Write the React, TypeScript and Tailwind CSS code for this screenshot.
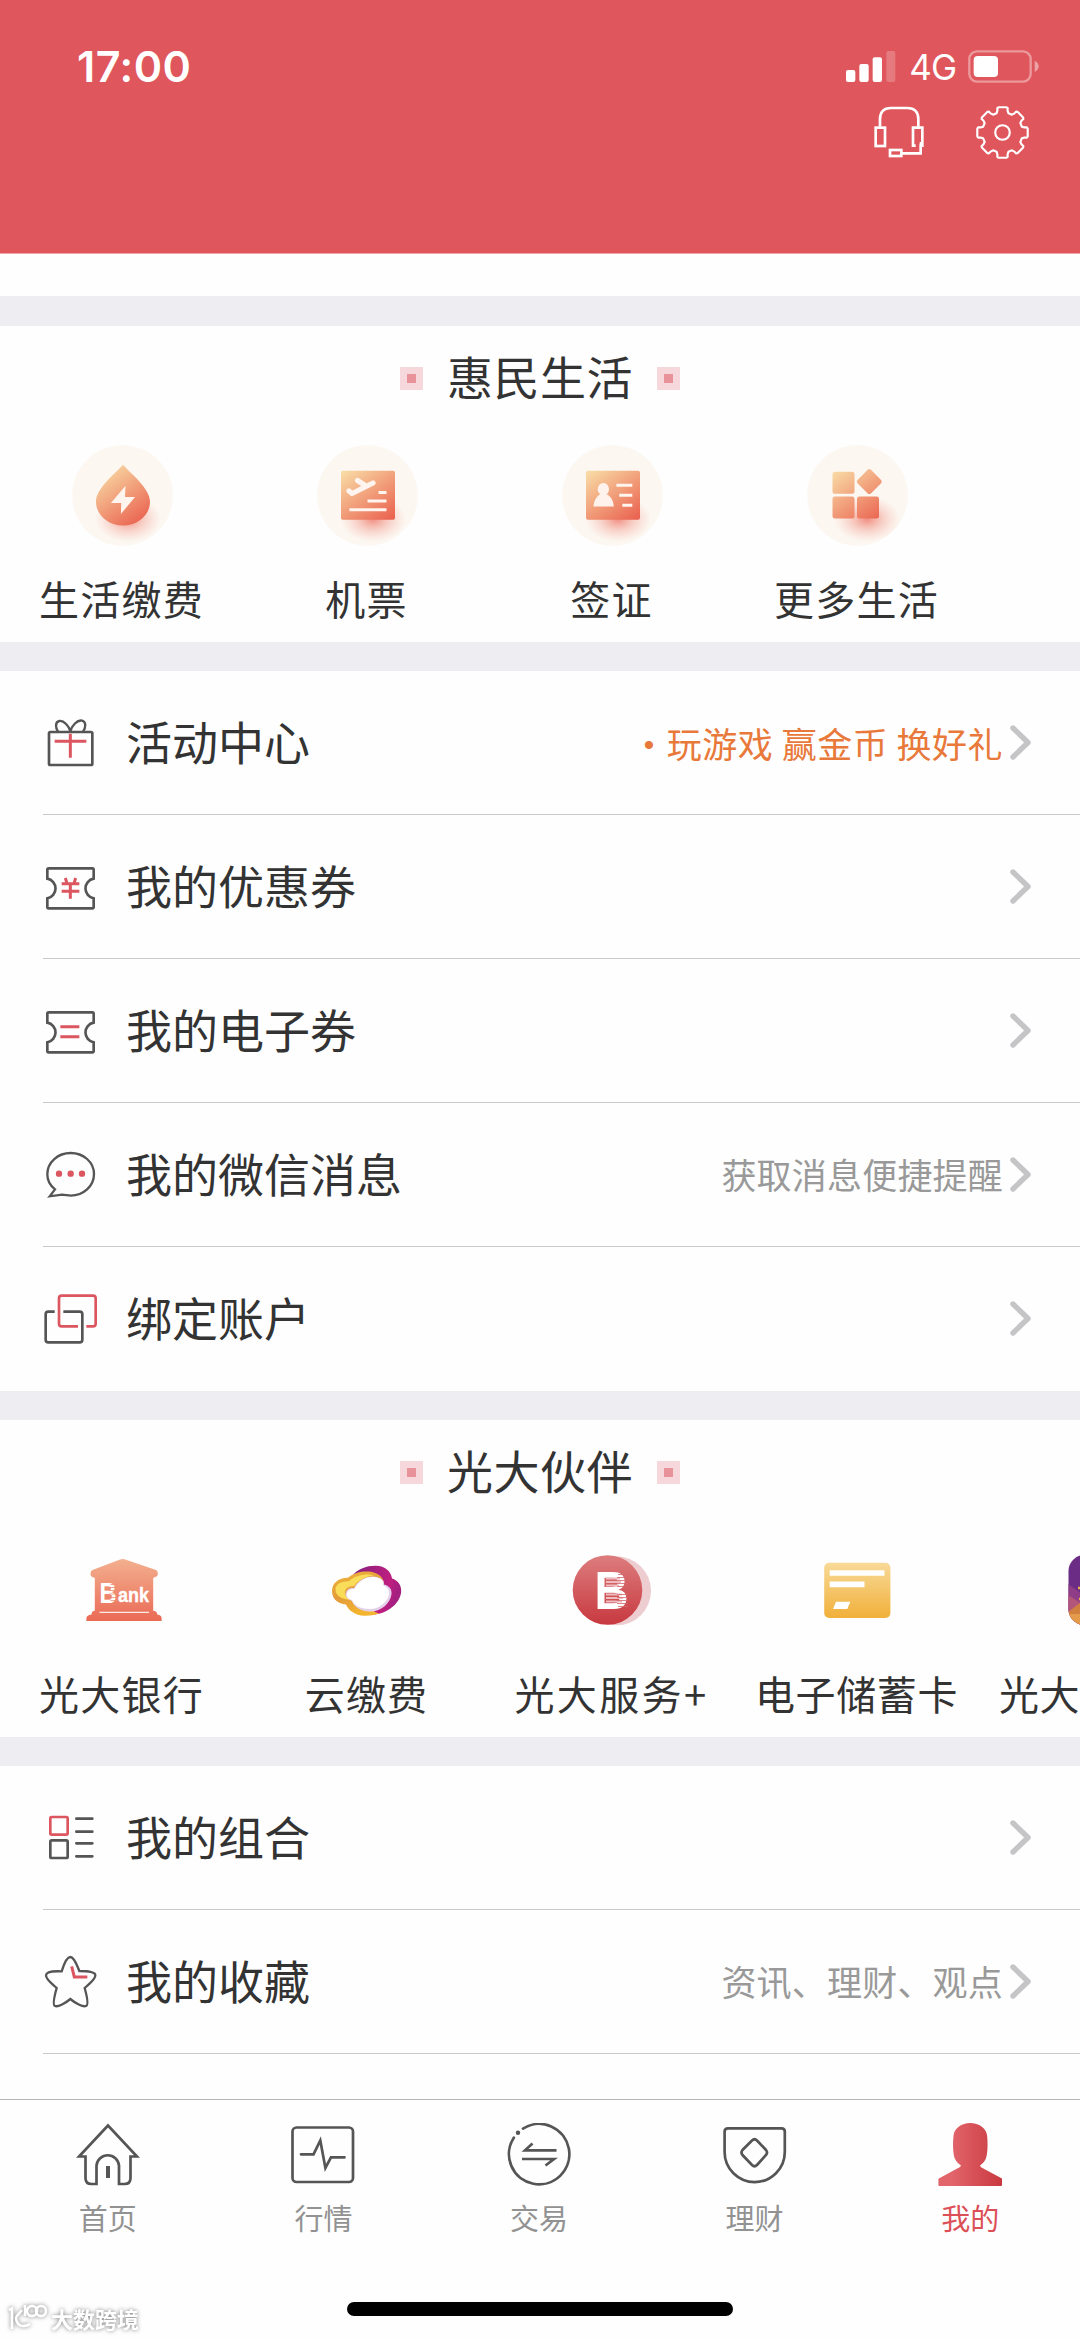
import type { ReactNode } from 'react'

const RED = '#dc5660'
const DARK = '#555555'

function gearPath() {
  const pts: string[] = []
  for (let i = 0; i < 8; i++) {
    const corners = [[61, -17], [68, -13], [75, -12], [77, -9], [77, 9], [75, 12], [68, 13], [61, 17]]
    corners.forEach(([r, deg]) => {
      const a = ((i * 45 + deg - 90) * Math.PI) / 180
      pts.push(`${(80 + r * Math.cos(a)).toFixed(1)} ${(80 + r * Math.sin(a)).toFixed(1)}`)
    })
  }
  return `M${pts.join('L')}Z`
}

function Header() {
  return (
    <header className="h-[254px] shrink-0 border-b border-[#f0a6a9] bg-[#df565c] text-white">
      <div className="flex h-[104px] items-center justify-between pl-[77px] pr-[41px] pt-[28px]">
        <span className="font-['Inter'] text-[43px] font-semibold leading-none tracking-[0.5px]">17:00</span>
        <div className="flex items-center">
          <svg className="h-[31px] w-[50px]" viewBox="0 0 150 93" fill="#fff">
            <rect x="0" y="57" width="28" height="36" rx="6" />
            <rect x="40" y="39" width="28" height="54" rx="6" />
            <rect x="80" y="19" width="28" height="74" rx="6" />
            <rect x="121" y="0" width="27" height="93" rx="6" opacity="0.22" />
          </svg>
          <span className="ml-[13px] translate-y-[1px] font-['Inter'] text-[35px] leading-none tracking-[-1px]">4G</span>
          <svg className="ml-[12px] h-[33px] w-[71px]" viewBox="0 0 213 99">
            <rect x="4" y="4" width="184" height="91" rx="23" fill="none" stroke="#fff" strokeWidth="7" opacity="0.4" />
            <rect x="17" y="18" width="73" height="63" rx="12" fill="#fff" />
            <path d="M200 32C209 36 212 43 212 49C212 55 209 62 200 66Z" fill="#fff" opacity="0.45" />
          </svg>
        </div>
      </div>
      <div className="flex h-[56px] items-center justify-end gap-[52px] pr-[51px]">
        <svg className="h-[52px] w-[50px]" viewBox="0 0 150 156" fill="none" stroke="#fff" strokeWidth="8">
          <path d="M18 62V40C18 18 30 6 50 6H101C121 6 133 18 133 40V62" />
          <rect x="5" y="65" width="28" height="55" />
          <path d="M125 119H117V65H145V119H140V142H84M141 108V122" />
          <rect x="48" y="132" width="34" height="18" />
        </svg>
        <svg className="h-[53px] w-[53px]" viewBox="0 0 160 160" fill="none" stroke="#fff" strokeWidth="6.5" strokeLinejoin="round">
          <path d={gearPath()} />
          <circle cx="80" cy="80" r="22" />
        </svg>
      </div>
    </header>
  )
}

function Mark() {
  return (
    <span className="flex h-[23px] w-[23px] items-center justify-center bg-[#f6d7dc]">
      <span className="h-[9px] w-[9px] bg-[#e8929a]" />
    </span>
  )
}

function SectionTitle({ children }: { children: ReactNode }) {
  return (
    <div className="flex h-[104px] items-center justify-center gap-[24px]">
      <Mark />
      <h2 className="-mt-[6px] text-[46px] leading-none tracking-[0.5px]">{children}</h2>
      <Mark />
    </div>
  )
}

function IconItem({ label, icon, labelClass = 'text-center tracking-[1.2px]' }: { label: string; icon: ReactNode; labelClass?: string }) {
  return (
    <div className="flex w-[245px] shrink-0 flex-col items-center">
      {icon}
      <span className={`mr-[2px] mt-[32px] whitespace-nowrap text-[40px] leading-[40px] ${labelClass}`}>{label}</span>
    </div>
  )
}

function LifeIcon({ id, glowX = 56, children }: { id: string; glowX?: number; children: ReactNode }) {
  return (
    <svg className="h-[101px] w-[101px]" viewBox="0 0 101 101">
      <defs>
        <linearGradient id={`${id}-fill`} gradientUnits="userSpaceOnUse" x1="32" y1="24" x2="72" y2="78">
          <stop offset="0" stopColor="#f8d9a3" />
          <stop offset="1" stopColor="#ea604e" />
        </linearGradient>
        <radialGradient id={`${id}-glow`}>
          <stop offset="0" stopColor="#ee6a5c" stopOpacity="0.75" />
          <stop offset="0.5" stopColor="#f08a7c" stopOpacity="0.35" />
          <stop offset="1" stopColor="#f5a59a" stopOpacity="0" />
        </radialGradient>
        <clipPath id={`${id}-clip`}>
          <circle cx="50.5" cy="50.5" r="50.3" />
        </clipPath>
      </defs>
      <circle cx="50.5" cy="50.5" r="50.3" fill="#fcf7f1" />
      <ellipse cx={glowX} cy="74" rx="33" ry="23" fill={`url(#${id}-glow)`} clipPath={`url(#${id}-clip)`} />
      <g fill={`url(#${id}-fill)`}>{children}</g>
    </svg>
  )
}

const lifeItems = [
  {
    label: '生活缴费',
    icon: (
      <LifeIcon id="pay">
        <path d="M51 19.8C57 27 78 43 78 56.5C78 70 66 80.5 51 80.5C36 80.5 24 70 24 56.5C24 43 45 27 51 19.8Z" />
        <path d="M53.5 40.7L38.9 58H49.2L48.9 69L63 52H53Z" fill="#fff4ee" />
      </LifeIcon>
    ),
  },
  {
    label: '机票',
    icon: (
      <LifeIcon id="flight">
        <rect x="24" y="25.7" width="54" height="49" rx="2" />
        <g fill="none" stroke="#fff4ee" strokeWidth="3">
          <path d="M32 46L35 48.5L56 38M40.5 35.5L49 41" strokeWidth="5.2" strokeLinecap="round" strokeLinejoin="round" />
          <path d="M61.5 47.5H69.5M50.5 56H69.5M32.4 64.7H69.5" />
        </g>
      </LifeIcon>
    ),
  },
  {
    label: '签证',
    icon: (
      <LifeIcon id="visa">
        <rect x="24" y="25.7" width="54" height="49" rx="2" />
        <path d="M41.3 38A6 6.2 0 0 1 44.5 49.2C49 51 51.5 56 51.8 61.5H31.5C31.8 56 34.5 51 38.2 49.2A6 6.2 0 0 1 41.3 38Z" fill="#fff1ec" />
        <path d="M54.4 40.2H70.3M57.2 50.2H70.3M60.3 60.2H70.3" stroke="#fff4ee" strokeWidth="3" />
      </LifeIcon>
    ),
  },
  {
    label: '更多生活',
    icon: (
      <LifeIcon id="more" glowX={60}>
        <rect x="25.5" y="26.7" width="22" height="22" rx="2.5" />
        <path d="M60.7 24.8Q62.3 23.2 63.9 24.8L74.1 35Q75.5 36.6 74.1 38.2L63.9 48.4Q62.3 49.8 60.7 48.4L50.5 38.2Q49.1 36.6 50.5 35Z" />
        <rect x="25.5" y="51.4" width="22" height="22" rx="2.5" />
        <rect x="50" y="51.4" width="22" height="22" rx="2.5" />
      </LifeIcon>
    ),
  },
]

function BankIcon() {
  return (
    <svg className="h-[101px] w-[101px]" viewBox="0 0 101 101">
      <defs>
        <linearGradient id="bank" x1="0" y1="0" x2="0" y2="1">
          <stop offset="0" stopColor="#f3b08f" />
          <stop offset="1" stopColor="#ea6a55" />
        </linearGradient>
      </defs>
      <path
        d="M50.8 19Q52 19 54 19.8L84 30Q85.8 30.8 85.8 33V34.5Q85.8 36.5 83 37L81.2 38V70.8Q85 71 85.3 74.5Q89.6 75 89.6 78V81H14.4V78Q14.6 75 19.5 74.5Q19.6 71 22.8 70.8V38L20.5 37Q18.6 36.5 18.6 34.5V33Q18.6 30.8 20.5 30L47.5 19.8Q49.5 19 50.8 19Z"
        fill="url(#bank)"
      />
      <path d="M27.5 72.4H77" stroke="#fff" strokeWidth="1.4" opacity="0.85" />
      <g fill="#fff" fontFamily="Liberation Sans, sans-serif" fontWeight="700">
        <text x="27.5" y="62.7" fontSize="29.5" textLength="17" lengthAdjust="spacingAndGlyphs">B</text>
        <text x="46" y="62" fontSize="20.5" textLength="31" lengthAdjust="spacingAndGlyphs" stroke="#fff" strokeWidth="0.4">ank</text>
      </g>
      <path d="M38.5 44.5H45M37 47.5H45M37 50.5H45M37 54H45M37 57.5H45M38.5 60.5H45" stroke="#ef8d73" strokeWidth="1.1" opacity="0.8" />
    </svg>
  )
}

function CloudIcon() {
  return (
    <svg className="h-[101px] w-[101px]" viewBox="0 0 101 101">
      <defs>
        <linearGradient id="cloud-purple" x1="0" y1="0" x2="1" y2="0.3">
          <stop offset="0" stopColor="#7f1f7d" />
          <stop offset="0.8" stopColor="#c01f80" />
          <stop offset="1" stopColor="#a31f80" />
        </linearGradient>
        <linearGradient id="cloud-yellow" x1="0" y1="0" x2="0.4" y2="1">
          <stop offset="0" stopColor="#f0b83c" />
          <stop offset="0.55" stopColor="#e39b3a" />
          <stop offset="1" stopColor="#f3b52f" />
        </linearGradient>
      </defs>
      <path d="M34 37.5C40 28.5 50 25.5 59 25.7C68 26 74 31 75 38.5C81 40.5 84.3 45 84.2 51C84 62 72 73 58 74.5L38 66Z" fill="url(#cloud-purple)" />
      <path d="M47.5 75.7C38 75.5 31 70 29 64.5C21 64 15 59 15 51C15 43 22 37.6 31 37.8C37 32.5 46 30.8 54 31.8C62 33 67.5 38.5 67 45L58 60C52 66 52 70 62 73.5C57 75.5 52 75.8 47.5 75.7Z" fill="url(#cloud-yellow)" />
      <path d="M18.5 49C19 44 24 41 32 41.2C38 35.5 48 33.5 57 35.2C46 36.5 40 42 37 46C31 46 27 49 28 54C29 57 31 59 34 60C24 59 18.5 56 18.5 49Z" fill="#f9dc58" />
      <path d="M35 61C30 59 27.5 56 29 52C30.5 48.5 33 47.5 37 48C41 40.5 48 36.5 56 36.5C63 36.8 68 40.5 67 44.5C72 45.5 75 49 74.5 54C73.5 64 63 72 52.5 71.5C43 71 37 67 35 61Z" fill="#e3d0ea" />
      <path d="M35 60C31 59 29 56 30 53C31 50 34 48.8 37.5 49C41 41.5 48 37 56 37C63 37.3 67 40.5 66 45C70 46.5 72.5 50 72 54C70.5 63 61 69.5 52 69C43 68.5 37 66 35 60Z" fill="#fff" />
    </svg>
  )
}

function ServiceIcon() {
  return (
    <svg className="h-[101px] w-[101px]" viewBox="0 0 101 101">
      <defs>
        <linearGradient id="service" x1="0" y1="0" x2="0" y2="1">
          <stop offset="0" stopColor="#dd7d7e" />
          <stop offset="1" stopColor="#c7393f" />
        </linearGradient>
      </defs>
      <circle cx="54.5" cy="50.8" r="34.5" fill="#eecdd0" />
      <circle cx="45.5" cy="50" r="34.8" fill="url(#service)" />
      <text x="32.5" y="69" fill="#fff" fontFamily="Liberation Sans, sans-serif" fontWeight="700" fontSize="54.5" textLength="34" lengthAdjust="spacingAndGlyphs">B</text>
      <path d="M44 38.5H58M44 42H59M44 45.5H57M44 54.5H60M44 58H61M44 61.5H60" stroke="#eebcbf" strokeWidth="2" />
      <path d="M56 34.5H66M55 37.5H66M55 40.5H66M55 43.5H66M55 46.5H66M55 54.5H66M55 57.5H66M55 60.5H66M55 63.5H66M56 66.5H66" stroke="#d4666a" strokeWidth="0.8" />
    </svg>
  )
}

function CardIcon() {
  return (
    <svg className="h-[101px] w-[101px]" viewBox="0 0 101 101">
      <defs>
        <linearGradient id="card" x1="0" y1="0" x2="0" y2="1">
          <stop offset="0" stopColor="#f8da98" />
          <stop offset="1" stopColor="#f1b03a" />
        </linearGradient>
      </defs>
      <rect x="17.2" y="22.7" width="66.2" height="55.2" rx="5" fill="url(#card)" />
      <path d="M22.7 30.3H77.5V35.8H22.7ZM22.7 41.4H57.5V47.3H22.7ZM29 61.7H43.3L40.3 68.9H26Z" fill="#fff" />
    </svg>
  )
}

function SunsetIcon() {
  return (
    <svg className="h-[101px] w-[101px]" viewBox="0 0 101 101">
      <clipPath id="sunset">
        <rect x="16.5" y="15" width="68" height="70" rx="16" />
      </clipPath>
      <g clipPath="url(#sunset)">
        <rect x="16" y="15" width="69" height="70" fill="#6b2c86" />
        <path d="M16 44L30 54V85H16Z" fill="#8f3d86" />
        <path d="M16 55L40 70V85H16Z" fill="#b2567a" />
        <path d="M16 72L32 60V85H16Z" fill="#d2803f" />
        <path d="M16 74H40V85H16Z" fill="#e39a4a" />
        <path d="M26 48H40M27 59H40" stroke="#f0b04a" strokeWidth="2.5" />
      </g>
    </svg>
  )
}

const partnerItems = [
  { label: '光大银行', icon: <BankIcon /> },
  { label: '云缴费', icon: <CloudIcon /> },
  {
    label: '光大服务+',
    icon: <ServiceIcon />,
    labelClass: 'text-center tracking-[2.4px]',
  },
  { label: '电子储蓄卡', icon: <CardIcon />, labelClass: 'text-center tracking-[0.6px]' },
  { label: '光大', icon: <SunsetIcon />, labelClass: 'w-[205px] text-left tracking-[0.4px]' },
]

function RowIcon({ children }: { children: ReactNode }) {
  return (
    <svg className="h-[55px] w-[55px]" viewBox="0 0 165 165" fill="none" stroke={DARK} strokeWidth="8">
      {children}
    </svg>
  )
}

const TICKET = 'M17 28H148Q152 28 152 32V59A30 30 0 0 0 152 118V144Q152 148 148 148H17Q13 148 13 144V118A30 30 0 0 0 13 59V32Q13 28 17 28Z'

type Row = { label: string; icon: ReactNode; hint?: ReactNode }

const serviceRows: Row[] = [
  {
    label: '活动中心',
    hint: (
      <span className="flex translate-y-[1px] items-center text-[#e8793a]">
        <span className="mr-[12px] translate-y-[2px] font-['Liberation_Sans'] text-[30px] leading-none">•</span>
        玩游戏 赢金币 换好礼
      </span>
    ),
    icon: (
      <RowIcon>
        <rect x="18" y="51" width="130" height="99" rx="4" />
        <path d="M82 50C79 33 62 16 49 18C35 21 38 40 45 50M82 50C86 32 103 14 117 17C131 20 128 40 120 50" strokeWidth="7" />
        <path d="M35 79H130M82 56V128" stroke={RED} strokeWidth="9" />
      </RowIcon>
    ),
  },
  {
    label: '我的优惠券',
    icon: (
      <RowIcon>
        <path d={TICKET} />
        <path d="M67 57L72 73M98 57L93 73M56 74H109M56 97H109M82 74V119" stroke={RED} strokeWidth="9" />
      </RowIcon>
    ),
  },
  {
    label: '我的电子券',
    icon: (
      <RowIcon>
        <path d={TICKET} />
        <path d="M52 71H109M52 101H109" stroke={RED} strokeWidth="9" />
      </RowIcon>
    ),
  },
  {
    label: '我的微信消息',
    hint: <span className="tracking-[0.2px] text-[#999999]">获取消息便捷提醒</span>,
    icon: (
      <RowIcon>
        <path d="M20 148L36 127C20 115 13 99 13 82C13 45 45 18 83 18C121 18 153 45 153 81C153 118 121 146 83 146C75 146 66 143 57 143Z" strokeWidth="7" />
        <g fill={RED} stroke="none">
          <circle cx="48" cy="80" r="9.5" />
          <circle cx="83" cy="80" r="9.5" />
          <circle cx="117" cy="80" r="9.5" />
        </g>
      </RowIcon>
    ),
  },
  {
    label: '绑定账户',
    icon: (
      <RowIcon>
        <path d="M130 106H150Q158 106 158 98V22Q158 14 150 14H56Q48 14 48 22V98Q48 106 56 106H105" stroke={RED} />
        <path d="M35 62H16Q8 62 8 70V146Q8 154 16 154H110Q118 154 118 146V70Q118 62 110 62H61" />
      </RowIcon>
    ),
  },
]

const personalRows: Row[] = [
  {
    label: '我的组合',
    icon: (
      <RowIcon>
        <rect x="22" y="21" width="52" height="53" rx="4" stroke={RED} />
        <rect x="22" y="91" width="52" height="53" rx="4" />
        <path d="M100 26H148M100 65H148M100 100H148M100 139H148" strokeLinecap="round" />
      </RowIcon>
    ),
  },
  {
    label: '我的收藏',
    hint: <span className="tracking-[0.2px] text-[#999999]">资讯、理财、观点</span>,
    icon: (
      <RowIcon>
        <path
          d="M56 52C61 36 70 9 82 9C94 9 103 36 109 51C125 51 157 52 157 64C158 76 135 92 125 102C130 120 138 153 129 156C120 160 96 147 82 135C68 147 45 160 36 156C27 153 36 120 41 102C31 92 8 76 9 64C10 52 40 51 56 52Z"
          strokeWidth="7"
        />
        <path d="M86 37L94 69H133" stroke={RED} strokeWidth="9" />
      </RowIcon>
    ),
  },
]

function ListRow({ row, divider }: { row: Row; divider: boolean }) {
  return (
    <div className={`ml-[43px] flex h-[144px] items-center border-b pr-[49px] ${divider ? 'border-[#cacaca]' : 'border-transparent'}`}>
      {row.icon}
      <span className="-mt-[5px] ml-[28px] text-[46px] leading-none">{row.label}</span>
      <div className="ml-auto flex items-center text-[35px] leading-none tracking-[0.5px]">
        <span className="-mt-[2px]">{row.hint}</span>
        <svg className="ml-[7px] h-[35px] w-[21px]" viewBox="0 0 21 35" fill="none" stroke="#c5c5c8" strokeWidth="5.4" strokeLinecap="round" strokeLinejoin="round">
          <path d="M3 3L18 17.5L3 32" />
        </svg>
      </div>
    </div>
  )
}

function TabIcon({ children }: { children: ReactNode }) {
  return (
    <svg className="h-[64px] w-[64px]" viewBox="0 0 64 64" fill="none" stroke={DARK} strokeWidth="2.7">
      {children}
    </svg>
  )
}

const tabs = [
  {
    label: '首页',
    icon: (
      <TabIcon>
        <path d="M32 2.5L3 33.5H9.5V55Q9.5 61 15.5 61H20.5V42.5A11.3 11.3 0 0 1 43 42.5V61H48.5Q54.5 61 54.5 55V33.5H61Z" />
        <path d="M32 43V55" strokeWidth="4" />
      </TabIcon>
    ),
  },
  {
    label: '行情',
    icon: (
      <TabIcon>
        <rect x="1.5" y="4.5" width="60.5" height="54.5" rx="4" />
        <path d="M10 31.3H22.5L29.3 17.5L34.4 45L40 34.3H53.5" strokeLinecap="round" />
      </TabIcon>
    ),
  },
  {
    label: '交易',
    icon: (
      <TabIcon>
        <path d="M6.8 14.7A30.2 30.2 0 1 0 16 5.6" strokeLinecap="round" />
        <circle cx="11" cy="9.7" r="2.2" fill={DARK} stroke="none" />
        <path d="M25.5 20.5L18 27.3H49.5M15 36H47L38.5 42.5" />
      </TabIcon>
    ),
  },
  {
    label: '理财',
    icon: (
      <TabIcon>
        <path d="M5 5.3H58.5Q61.8 5.3 61.8 8.6V29A30.1 30.1 0 0 1 1.6 29V8.6Q1.6 5.3 5 5.3Z" />
        <path d="M29 17.5Q31.5 15 34 17.5L43 27Q45 29.5 43 32L34 42Q31.5 44.5 29 42L19.5 32Q17.5 29.5 19.5 27Z" />
      </TabIcon>
    ),
  },
  {
    label: '我的',
    active: true,
    icon: (
      <svg className="h-[64px] w-[64px]" viewBox="0 0 64 64">
        <defs>
          <linearGradient id="me" x1="0" y1="0" x2="1" y2="0">
            <stop offset="0.2" stopColor="#e2656b" />
            <stop offset="1" stopColor="#c8393f" />
          </linearGradient>
        </defs>
        <path
          d="M32.2 0C23.5 0 16.5 5 15.6 12C14.8 18 14.8 26 15.8 32C16.6 37 19.5 40 23 42.5L22 44L0.8 55.5Q0.4 55.8 0.4 56.5V62Q0.4 63 1.4 63H63Q64 63 64 62V56Q64 55.5 63.5 55.2L43 44.2L42 42.5C45.5 40 48 37 48.8 32C49.8 26 49.8 18 49 12C48 5 41 0 32.2 0Z"
          fill="url(#me)"
        />
      </svg>
    ),
  },
]

function Watermark() {
  return (
    <div className="absolute bottom-[7px] left-[8px] flex items-center gap-[4px] drop-shadow-[0_0_2px_rgba(0,0,0,0.5)]">
      <svg className="h-[28px] w-[39px]" viewBox="0 0 39 28" fill="none" stroke="#fff" strokeWidth="2.6">
        <path d="M1 6L4 4.5V25M14 6L8 13M8 13C8 20 13 25 22 20" />
        <path d="M17 1V12" />
        <circle cx="24" cy="7" r="5" />
        <circle cx="33" cy="7" r="5" />
      </svg>
      <span className="text-[22px] font-bold leading-none text-white">大数跨境</span>
    </div>
  )
}

export default function App() {
  return (
    <div className="relative flex h-[2339px] w-[1080px] flex-col overflow-hidden bg-[#fefefe] font-['Noto_Sans_CJK_SC',sans-serif] text-[#333333]">
      <Header />
      <div className="mt-[42px] h-[30px] shrink-0 bg-[#eeedf2]" />

      <section className="h-[316px] shrink-0">
        <SectionTitle>惠民生活</SectionTitle>
        <div className="mt-[15px] flex">
          {lifeItems.map((item) => (
            <IconItem key={item.label} {...item} />
          ))}
        </div>
      </section>
      <div className="h-[29px] shrink-0 bg-[#eeedf2]" />

      <section className="shrink-0">
        {serviceRows.map((row, i) => (
          <ListRow key={row.label} row={row} divider={i < serviceRows.length - 1} />
        ))}
      </section>
      <div className="h-[29px] shrink-0 bg-[#eeedf2]" />

      <section className="h-[317px] shrink-0 overflow-hidden">
        <SectionTitle>光大伙伴</SectionTitle>
        <div className="mt-[16px] flex">
          {partnerItems.map((item) => (
            <IconItem key={item.label} {...item} />
          ))}
        </div>
      </section>
      <div className="h-[29px] shrink-0 bg-[#eeedf2]" />

      <section className="h-[333px] shrink-0">
        {personalRows.map((row) => (
          <ListRow key={row.label} row={row} divider />
        ))}
      </section>

      <nav className="flex flex-1 flex-col items-center border-t border-[#b5b5b5]">
        <div className="flex w-full pr-[2px] pt-[23px]">
          {tabs.map((tab) => (
            <div key={tab.label} className="flex flex-1 flex-col items-center">
              {tab.icon}
              <span className={`mt-[16px] text-[29px] leading-[29px] ${tab.active ? 'text-[#dc4f57]' : 'text-[#929292]'}`}>{tab.label}</span>
            </div>
          ))}
        </div>
        <div className="mb-[23px] mt-auto h-[14px] w-[386px] rounded-full bg-black" />
      </nav>
      <Watermark />
    </div>
  )
}
